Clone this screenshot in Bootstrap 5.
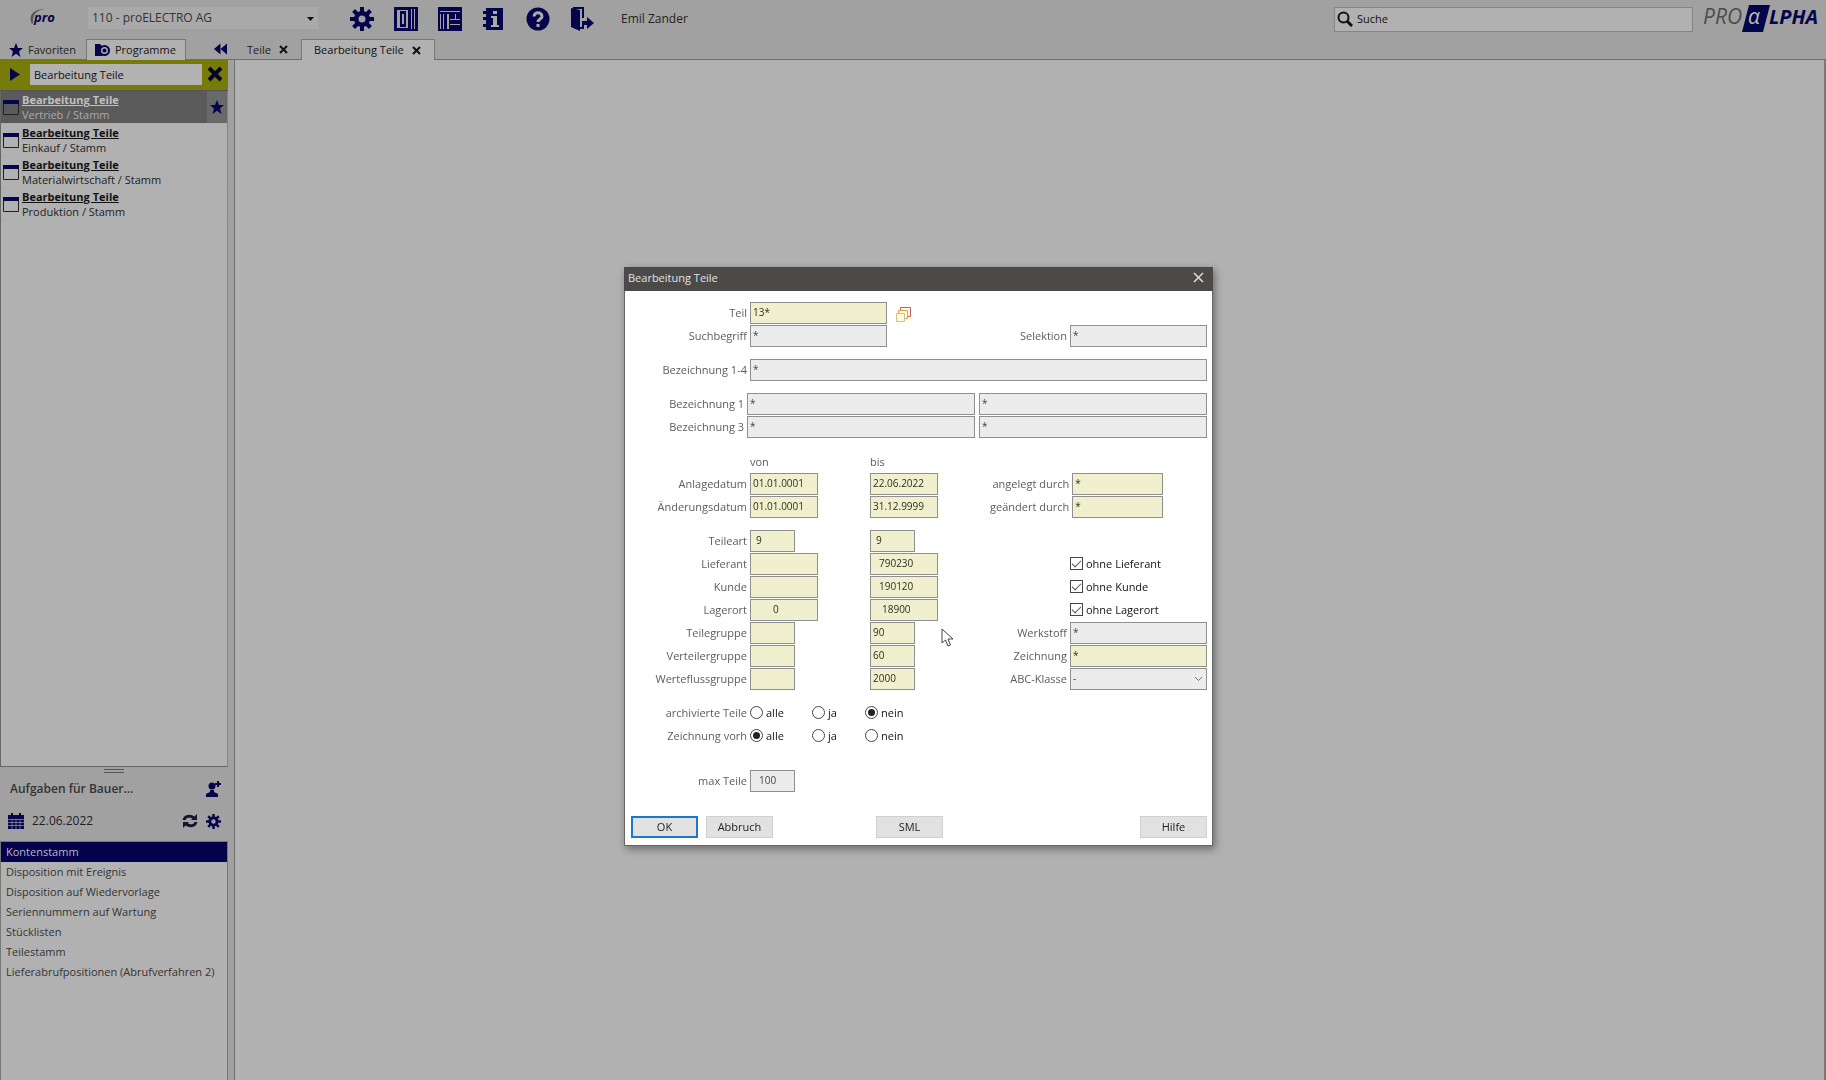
<!DOCTYPE html>
<html lang="de">
<head>
<meta charset="utf-8">
<meta name="viewport" content="width=device-width, initial-scale=1">
<title>Bearbeitung Teile</title>
<link href="https://cdn.jsdelivr.net/npm/bootstrap@5.3.0/dist/css/bootstrap.min.css" rel="stylesheet">
<style>
:root { --chrome:#a1a1a1; --sheet:#b1b1b1; --navy:#05054c; --edge:#6e6e6e; }
body { font-family:"Open Sans","Noto Sans",sans-serif; font-size:11px; line-height:16px; color:#222; background:var(--chrome); overflow:hidden; }
svg { display:block; flex:none; }
.ico { fill:var(--navy); color:var(--navy); }
button.plain { border:0; background:none; padding:0; color:inherit; }
a { color:inherit; text-decoration:none; }

.topbar { height:39px; padding:7px 2px 0 28px; }
.client { width:230px; height:22px; margin-left:30px; border:0; background:#a9a9a9; font-size:12px; color:#333; padding:0 4px; appearance:none; }
.client-wrap { position:relative; }
.client-wrap svg { position:absolute; right:4px; top:10px; }
.tools { margin-left:32px; gap:20px; }
.user { font-size:12px; margin-left:27px; }
.finder { width:359px; height:25px; border:1px solid #858585; background:var(--sheet); padding:0 2px 1px; }
.finder input, .filter input { border:0; background:transparent; outline:0; color:#111; font-size:11px; padding:0; min-width:0; }
.finder input::placeholder { color:#111; opacity:1; }
.brand { margin:-7px 0 0 9px; }

.tabs { height:21px; border-bottom:1px solid var(--edge); }
.side-tabs { width:235px; flex:none; }
.tabitem { height:21px; margin-bottom:-1px; }
.tabitem.on { background:var(--sheet); border:1px solid #777; border-bottom:0; color:#111; }
.sidebar { width:235px; flex:none; border-right:1px solid var(--edge); padding-right:6px; }
.filter { height:31px; background:#777b07; border-bottom:1px solid #555; padding:0 5px 2px 8px; width:228px; }
.filter input { height:21px; width:172px; background:#b3b3b3; padding:0 4px; margin-left:9px; }
.programs { background:var(--sheet); border:1px solid #666; border-top:0; border-right-color:#858585; width:228px; }
.prog { height:32px; gap:3px; line-height:15px; border-bottom:1px solid #adadad; }
.prog b { text-decoration:underline; display:block; color:#111; }
.prog.sel { background:#5a5a5a; color:#aaa; height:33px; }
.prog.sel b { color:#c0c0c0; }
.prog .fav { width:20px; height:32px; background:#696969; }
.grip { width:20px; height:4px; border-top:1px solid #555; border-bottom:1px solid #555; margin:2px 0 0 104px; }
.taskhead { padding:8px 7px 0 8px; height:68px; }
.taskhead .who { font-size:12px; font-weight:600; color:#333; padding-left:2px; }
.tasks { height:239px; background:var(--sheet); border:1px solid #777; border-bottom:0; width:228px; }
.tasks a { display:block; height:20px; line-height:20px; padding-left:5px; white-space:nowrap; color:#333; }
.tasks a.cur { background:#03034c; color:#b8b8c8; }
.work { background:var(--sheet); border-right:2px solid #777; }

.stage { position:fixed; inset:0; padding:32px 0 0 11px; pointer-events:none; }
.dlg { width:589px; background:#fff; border:1px solid #666; border-top:0; box-shadow:2px 3px 8px rgba(0,0,0,.4); position:relative; pointer-events:auto; color:#5c5c5c; }
.dlg-title { height:24px; margin:0 -1px; padding:0 8px 2px 4px; background:#4b4a49; color:#e2e2e2; }
.dlg form { padding:11px 5px 7px 0; }
.grid { display:grid; grid-template-columns:125px 120px 120px 1fr 137px; grid-auto-rows:23px; align-items:start; }
.grid + .grid { margin-top:11px; }
.grid.top { grid-template-columns:125px 137px 1fr 137px; }
.grid.line { grid-template-columns:125px 1fr; }
.grid label, .grid .lbl { line-height:21px; white-space:nowrap; }
.grid .lbl.col-head { line-height:23px; }
.grid label.r, .grid .lbl.r { text-align:right; padding-right:3px; }
.grid label.r.pull { padding-right:6px; }
.tf { height:22px; width:100%; border:1px solid #8f8f8f; border-radius:0; padding:0 0 2px 2px; font-size:10px; color:#2e2e20; background:#f0f0cf; outline:0; min-width:0; }
.tf.off { background:#ececec; color:#444; }
.tf.date { width:68px; } .tf.few { width:45px; } .tf.mid { width:91px; }
.tf.ind { padding-left:8px; } .tf.in1 { padding-left:5px; } .tf.in2 { padding-left:11px; } .tf.in3 { padding-left:22px; }
.pair { grid-column:2/6; display:grid; grid-template-columns:1fr 1fr; column-gap:4px; margin-left:-3px; }
.chk { display:flex; align-items:center; gap:3px; color:#111; height:22px; }
.chk input { appearance:none; width:13px; height:13px; margin:0; border:1px solid #444; background:#fff; display:grid; place-items:center; flex:none; }
.chk input[type=radio] { border-radius:50%; }
.chk input[type=radio]:checked::after { content:""; width:7px; height:7px; border-radius:50%; background:#222; }
.chk input[type=checkbox]:checked::after { content:""; width:9px; height:5px; border:solid #555; border-width:0 0 1px 1px; transform:translateY(-1px) rotate(-45deg); }
.radios { display:grid; grid-template-columns:62px 53px 1fr; grid-column:2/6; }
.abc { position:relative; }
.abc select { appearance:none; background:#e0e0e0; }
.abc svg { position:absolute; right:4px; top:8px; }
.max-row.grid { margin-top:22px; }
.actions { margin-top:23px; padding-left:6px; }
.push { width:67px; height:22px; border:1px solid #d0d0d0; border-radius:0; background:#e1e1e1; padding:0; font-size:11px; line-height:18px; color:#222; }
.push.main { border:2px solid #1a78c8; }
.push.sml { margin-left:103px; }
.pointer { position:absolute; left:316px; top:361px; }
</style>
</head>
<body class="vh-100 d-flex flex-column">
<header class="topbar d-flex align-items-start">
  <svg width="30" height="22" viewBox="0 0 30 22"><path d="M4 17C0 9 5 2 17 2C8 3 4 8 5 16z" fill="#555"/><text x="6" y="15" font-family="Open Sans, sans-serif" font-size="13" font-weight="700" font-style="italic" fill="#05054c">pro</text></svg>
  <div class="client-wrap"><select class="client" aria-label="Mandant"><option>110 - proELECTRO AG</option></select>
    <svg width="7" height="4" viewBox="0 0 7 4"><path d="M0 0h7L3.500 4z" fill="#111"/></svg></div>
  <nav class="tools d-flex ico" aria-label="Werkzeuge">
    <button class="plain" aria-label="Einstellungen"><svg class="ico" width="24" height="24" viewBox="0 0 24 24"><g id="gear"><path fill-rule="evenodd" d="M12 4a8 8 0 1 0 0 16a8 8 0 0 0 0-16zM12 8.500a3.500 3.500 0 1 1 0 7a3.500 3.500 0 0 1 0-7z"/><path d="M10 0h4v5h-4zM10 19h4v5h-4zM0 10h5v4H0zM19 10h5v4h-5zM2.100 5l2.900-2.900 3.500 3.500-2.900 2.900zM15.500 18.400l2.900-2.900 3.500 3.500-2.900 2.900zM2.100 19l3.500-3.500 2.900 2.900L5 21.900zM15.500 5.600L19 2.100 21.900 5l-3.500 3.500z"/></g></svg></button>
    <button class="plain" aria-label="Spalten"><svg class="ico" width="24" height="24" viewBox="0 0 24 24"><path fill-rule="evenodd" d="M0 0h24v24H0zM3 3v18h11V3zM17 2v20h1V2zM20 2v20h1V2z"/><path fill-rule="evenodd" d="M6 4h6v16H6zM8 7v10h2V7z"/></svg></button>
    <button class="plain" aria-label="Layout"><svg class="ico" width="24" height="24" viewBox="0 0 24 24"><path fill-rule="evenodd" d="M0 0h24v24H0zM2 4v1h20V4zM2 7v15h1V7zM5 7v15h1V7zM9 7v15h2V7zM12 12v1h10v-1zM12 17v1h10v-1zM17 7v5h1V7z"/></svg></button>
    <button class="plain" aria-label="Info"><svg class="ico" width="24" height="24" viewBox="0 0 24 24"><path d="M4 1h17v22H4zM1 4h4v3H1zM1 10h4v3H1zM1 17h4v3H1z"/><path d="M11 4h4v3h-4zM9 9h6v9h2v2H9v-2h2v-7H9z" fill="#aaa"/></svg></button>
    <button class="plain" aria-label="Hilfe"><svg class="ico" width="24" height="24" viewBox="0 0 24 24"><circle cx="12" cy="12" r="11.500"/><path d="M8 9.500C8 4.500 16 4.500 16 9.500C16 12 12 12 12 15" fill="none" stroke="#aaa" stroke-width="3"/><path d="M10.500 17h3v3h-3z" fill="#aaa"/></svg></button>
    <button class="plain" aria-label="Beenden"><svg class="ico" width="24" height="24" viewBox="0 0 24 24"><path d="M1 1l9 2v21l-9-4z"/><path d="M3 1h10v10M13 18v3H9" fill="none" stroke="#05054c" stroke-width="2"/><path d="M12 14h5v-4l7 6-7 6v-4h-5z"/></svg></button>
  </nav>
  <span class="user pt-1">Emil Zander</span>
  <div class="finder d-flex align-items-center ms-auto">
    <svg width="16" height="16" viewBox="0 0 16 16" fill="none" stroke="#111"><circle cx="6.500" cy="6.500" r="5" stroke-width="2"/><path d="M10 10l5 5" stroke-width="3"/></svg>
    <input class="flex-fill ms-1" type="search" placeholder="Suche" aria-label="Suche">
  </div>
  <svg class="brand" width="122" height="39" viewBox="0 0 122 39" font-family="Open Sans, sans-serif" font-size="20" font-style="italic"><text x="1" y="24" fill="#4d4d4d" font-weight="500" font-size="21">PRO</text><path d="M47 5h21l-7 27H40z" fill="#05054c"/><text x="46" y="24" fill="#bbb" font-size="21">α</text><text x="67" y="24" fill="#05054c" font-weight="700">LPHA</text></svg>
</header>

<nav class="tabs d-flex" aria-label="Register">
  <div class="side-tabs d-flex">
    <a href="#" class="tabitem d-flex align-items-center ps-2" style="width:86px"><svg class="ico me-1" width="16" height="16" viewBox="0 0 16 16"><path id="star" d="M8 1l2 5h5l-4 3.500L12.500 15 8 11.700 3.500 15 5 9.500 1 6h5z"/></svg>Favoriten</a>
    <a href="#" class="tabitem on d-flex align-items-center ps-2" style="width:100px"><svg class="me-1" width="16" height="14" viewBox="0 0 16 14"><path d="M0 1h5l2 2v10H0z" fill="#05054c"/><circle cx="9.500" cy="7.500" r="4.500" fill="#aaa" stroke="#05054c" stroke-width="2"/><circle cx="9.500" cy="7.500" r="2" fill="#05054c"/></svg>Programme</a>
    <button class="plain ms-auto me-2" aria-label="Einklappen"><svg class="ico" width="14" height="12" viewBox="0 0 15 12"><path d="M8 0v12L1 6zM15 0v12L8 6z"/></svg></button>
  </div>
  <a href="#" class="tabitem d-flex align-items-center justify-content-between" style="width:66px;padding:0 13px 0 12px">Teile <svg width="9" height="9" viewBox="0 0 9 9"><path d="M1 1l7 7M8 1L1 8" stroke="#111" stroke-width="2"/></svg></a>
  <a href="#" class="tabitem on d-flex align-items-center justify-content-between" style="width:134px;padding:0 13px 0 12px">Bearbeitung Teile <svg width="9" height="9" viewBox="0 0 9 9"><path d="M1 1l7 7M8 1L1 8" stroke="#111" stroke-width="2"/></svg></a>
</nav>

<div class="d-flex flex-fill" style="min-height:0">
  <aside class="sidebar d-flex flex-column">
    <div class="filter d-flex align-items-center">
      <svg class="ico" width="13" height="13" viewBox="0 0 13 13"><path d="M2 0l10 6.500L2 13z"/></svg>
      <input type="text" value="Bearbeitung Teile" aria-label="Programmsuche">
      <button class="plain ms-auto" aria-label="Suche leeren"><svg width="16" height="16" viewBox="0 0 16 16"><path d="M2 2l12 12M14 2L2 14" stroke="#06062c" stroke-width="4"/></svg></button>
    </div>
    <div class="programs flex-fill">
      <a href="#" class="prog sel d-flex align-items-center"><svg width="18" height="18" viewBox="0 0 18 18"><g id="win"><path d="M2.500 2.500h15v14h-15z" fill="none" stroke="#222"/><path d="M2 2h16v4H2z" fill="#05054c"/></g></svg><span class="flex-fill"><b>Bearbeitung Teile</b>Vertrieb / Stamm</span><span class="fav d-flex align-items-center justify-content-center"><svg class="ico" width="16" height="16" viewBox="0 0 16 16"><use href="#star"/></svg></span></a>
      <a href="#" class="prog d-flex align-items-center"><svg width="18" height="18" viewBox="0 0 18 18"><use href="#win"/></svg><span><b>Bearbeitung Teile</b>Einkauf / Stamm</span></a>
      <a href="#" class="prog d-flex align-items-center"><svg width="18" height="18" viewBox="0 0 18 18"><use href="#win"/></svg><span><b>Bearbeitung Teile</b>Materialwirtschaft / Stamm</span></a>
      <a href="#" class="prog d-flex align-items-center"><svg width="18" height="18" viewBox="0 0 18 18"><use href="#win"/></svg><span><b>Bearbeitung Teile</b>Produktion / Stamm</span></a>
    </div>
    <div class="grip"></div>
    <div class="taskhead">
      <div class="d-flex align-items-center justify-content-between mb-3"><span class="who">Aufgaben für Bauer...</span><button class="plain" aria-label="Benutzer hinzufügen"><svg class="ico" width="16" height="16" viewBox="0 0 16 16"><circle cx="7" cy="5" r="3.500"/><path d="M1 16v-3l4-2V9h4v2l4 2v3zM12 0h2v2h2v2h-2v2h-2V4h-2V2h2z"/></svg></button></div>
      <div class="d-flex align-items-center"><svg class="me-2" width="16" height="16" viewBox="0 0 16 16"><path d="M0 2h3V0h2v2h6V0h2v2h3v14H0z" fill="#05054c"/><path d="M0 6.500h16M0 9.500h16M0 12.500h16M4 6v10M8 6v10M12 6v10" stroke="#9a9aa8" stroke-width=".7"/></svg><span style="font-size:12px">22.06.2022</span>
        <button class="plain ms-auto me-2" aria-label="Aktualisieren"><svg width="16" height="16" viewBox="0 0 16 16"><path d="M2 7C3 3 8 2 12 5M14 9C13 13 8 14 4 11" fill="none" stroke="#15152c" stroke-width="3"/><path d="M9 7h6V1zM7 9H1v6z" fill="#15152c"/></svg></button>
        <button class="plain" aria-label="Aufgaben einstellen"><svg class="ico" width="15" height="15" viewBox="0 0 24 24"><use href="#gear"/></svg></button></div>
    </div>
    <div class="tasks">
      <a href="#" class="cur">Kontenstamm</a><a href="#">Disposition mit Ereignis</a><a href="#">Disposition auf Wiedervorlage</a><a href="#">Seriennummern auf Wartung</a><a href="#">Stücklisten</a><a href="#">Teilestamm</a><a href="#">Lieferabrufpositionen (Abrufverfahren 2)</a>
    </div>
  </aside>
  <main class="work flex-fill"></main>
</div>

<div class="stage d-flex align-items-center justify-content-center">
<section class="dlg" role="dialog" aria-labelledby="dt">
  <div class="dlg-title d-flex align-items-center justify-content-between"><span id="dt">Bearbeitung Teile</span><button class="plain" aria-label="Schließen"><svg width="13" height="11" viewBox="0 0 13 11"><path d="M2 1l9 9M11 1l-9 9" stroke="#ddd" stroke-width="1.500"/></svg></button></div>
  <form>
    <div class="grid top">
      <label class="r" for="f1">Teil</label><input class="tf" id="f1" value="13*"><button type="button" class="plain ms-2 mt-1" aria-label="Auswahl" style="width:18px"><svg width="17" height="17" viewBox="0 0 17 17" fill="#fffbe8"><path d="M5.500 1.500h10v9h-10z" stroke="#c0605a"/><path d="M3.500 4.500h9v8h-9z" stroke="#e8a23c"/><path d="M1.500 7.500h8v8h-8z" stroke="#d8c07a"/></svg></button><span></span>
      <label class="r" for="f2">Suchbegriff</label><input class="tf off" id="f2" value="*"><label class="r" for="f3">Selektion</label><input class="tf off" id="f3" value="*">
    </div>
    <div class="grid line"><label class="r" for="f4">Bezeichnung 1-4</label><input class="tf off" id="f4" value="*"></div>
    <div class="grid">
      <label class="r pull" for="f5">Bezeichnung 1</label><div class="pair"><input class="tf off" id="f5" value="*"><input class="tf off" aria-label="Bezeichnung 2" value="*"></div>
      <label class="r pull" for="f6">Bezeichnung 3</label><div class="pair"><input class="tf off" id="f6" value="*"><input class="tf off" aria-label="Bezeichnung 4" value="*"></div>
    </div>
    <div class="grid">
      <span></span><span class="lbl col-head">von</span><span class="lbl col-head">bis</span><span></span><span></span>
      <label class="r" for="g1">Anlagedatum</label><input class="tf date" id="g1" value="01.01.0001"><input class="tf date" aria-label="Anlagedatum bis" value="22.06.2022"><label class="r" for="g2">angelegt durch</label><input class="tf mid" id="g2" value="*">
      <label class="r" for="g3">Änderungsdatum</label><input class="tf date" id="g3" value="01.01.0001"><input class="tf date" aria-label="Änderungsdatum bis" value="31.12.9999"><label class="r" for="g4">geändert durch</label><input class="tf mid" id="g4" value="*">
    </div>
    <div class="grid">
      <label class="r" for="h1">Teileart</label><input class="tf few in1" id="h1" value="9"><input class="tf few in1" aria-label="Teileart bis" value="9"><span></span><span></span>
      <label class="r" for="h2">Lieferant</label><input class="tf date" id="h2"><input class="tf date ind" aria-label="Lieferant bis" value="790230"><span></span><label class="chk"><input type="checkbox" checked>ohne Lieferant</label>
      <label class="r" for="h3">Kunde</label><input class="tf date" id="h3"><input class="tf date ind" aria-label="Kunde bis" value="190120"><span></span><label class="chk"><input type="checkbox" checked>ohne Kunde</label>
      <label class="r" for="h4">Lagerort</label><input class="tf date in3" id="h4" value="0"><input class="tf date in2" aria-label="Lagerort bis" value="18900"><span></span><label class="chk"><input type="checkbox" checked>ohne Lagerort</label>
      <label class="r" for="h5">Teilegruppe</label><input class="tf few" id="h5"><input class="tf few" aria-label="Teilegruppe bis" value="90"><label class="r" for="h6">Werkstoff</label><input class="tf off" id="h6" value="*">
      <label class="r" for="h7">Verteilergruppe</label><input class="tf few" id="h7"><input class="tf few" aria-label="Verteilergruppe bis" value="60"><label class="r" for="h8">Zeichnung</label><input class="tf" id="h8" value="*">
      <label class="r" for="h9">Werteflussgruppe</label><input class="tf few" id="h9"><input class="tf few" aria-label="Werteflussgruppe bis" value="2000"><label class="r" for="h10">ABC-Klasse</label><div class="abc"><select class="tf off" id="h10"><option>-</option></select><svg width="9" height="6" viewBox="0 0 9 6"><path d="M1 1l3.500 3.500L8 1" fill="none" stroke="#777"/></svg></div>
    </div>
    <div class="grid">
      <span class="lbl r">archivierte Teile</span><div class="radios"><label class="chk"><input type="radio" name="a">alle</label><label class="chk"><input type="radio" name="a">ja</label><label class="chk"><input type="radio" name="a" checked>nein</label></div>
      <span class="lbl r">Zeichnung vorh</span><div class="radios"><label class="chk"><input type="radio" name="z" checked>alle</label><label class="chk"><input type="radio" name="z">ja</label><label class="chk"><input type="radio" name="z">nein</label></div>
    </div>
    <div class="grid line max-row"><label class="r" for="m1">max Teile</label><input class="tf off few ind" id="m1" value="100"></div>
    <div class="actions d-flex"><button type="button" class="push main me-2">OK</button><button type="button" class="push">Abbruch</button><button type="button" class="push sml">SML</button><button type="button" class="push ms-auto">Hilfe</button></div>
  </form>
  <svg class="pointer" width="13" height="19" viewBox="0 0 13 19"><path d="M1 1v14l3.500-3 2.500 6 2.500-1-2.500-6h5z" fill="#fff" stroke="#444"/></svg>
</section>
</div>
<script src="https://cdn.jsdelivr.net/npm/bootstrap@5.3.0/dist/js/bootstrap.bundle.min.js"></script>
</body>
</html>
